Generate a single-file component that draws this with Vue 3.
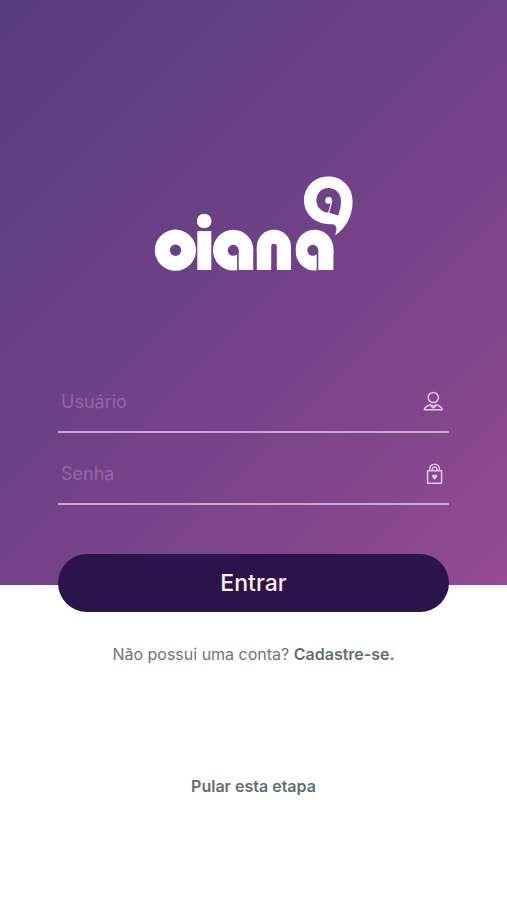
<script setup>
import { ref } from 'vue'

const user = ref('')
const password = ref('')
</script>

<template>
  <main class="login">
    <form class="hero" @submit.prevent>
      <svg class="logo" viewBox="0 0 200 96" role="img" aria-label="oiana">
        <defs>
          <mask id="cut-o">
            <rect width="200" height="96" fill="#fff" />
            <circle cx="21.5" cy="74.3" r="5.7" fill="#000" />
          </mask>
          <mask id="cut-first">
            <rect width="200" height="96" fill="#fff" />
            <circle cx="79.2" cy="74.3" r="5.5" fill="#000" />
            <rect x="83.1" y="74.3" width="1.6" height="21" fill="#000" />
          </mask>
          <mask id="cut-last">
            <rect width="200" height="96" fill="#fff" />
            <circle cx="158.8" cy="74.3" r="5.5" fill="#000" />
            <rect x="162.7" y="74.3" width="1.6" height="21" fill="#000" />
          </mask>
        </defs>
        <g fill="#fff">
          <circle cx="21.4" cy="74.2" r="20.6" mask="url(#cut-o)" />
          <circle cx="50.2" cy="45" r="7.3" />
          <rect x="43.3" y="55" width="14" height="39" />
          <g mask="url(#cut-first)">
            <ellipse cx="79.2" cy="74.2" rx="20.2" ry="20.4" />
            <rect x="84" y="74" width="15.2" height="20" />
          </g>
          <rect x="102.8" y="53.8" width="34.2" height="38" rx="17" />
          <rect x="102.8" y="72" width="14.4" height="22" />
          <rect x="122.8" y="72" width="14.2" height="22" />
          <g mask="url(#cut-last)">
            <rect x="141.8" y="53.8" width="37.6" height="40.8" rx="18.8" />
            <rect x="164" y="74" width="15.4" height="20" />
          </g>
          <path d="M174.4.6C160.5.6 150 11 150 24.6C150 38.8 162 48.3 176.5 48.3C180.3 48.2 182.7 49.8 182.5 53.2C182.4 55.5 181.5 57.4 181.1 59.3C191.5 52.5 198.6 40.5 198.6 25.6C198.6 10.8 188 .6 174.4.6Z" />
        </g>
        <rect x="117.2" y="67.8" width="5.6" height="27" rx="2.8" fill="#73428a" />
        <path d="M174.5 12C167.6 12 162.4 17.3 162.4 24.2C162.4 31 167.3 36.2 174 36.6L184.2 39.4C185.8 35 187 29.8 187 25.2C187 17.4 181.5 12 174.5 12Z" fill="#70428a" />
        <circle cx="174.6" cy="24.4" r="3.4" fill="#fff" />
        <path d="M177.4 24.4C177.5 29 175.5 32 174.7 37" fill="none" stroke="#fff" stroke-width="1.2" />
      </svg>

      <div class="fields">
        <label class="field">
          <input v-model="user" type="text" placeholder="Usuário" aria-label="Usuário" autocomplete="username" />
          <svg class="icon" viewBox="0 0 20 22" aria-hidden="true">
            <circle cx="10.3" cy="6.5" r="5.1" />
            <path d="M1.2 18.8C1.8 16.2 4.4 14.6 7.4 13.7L10.3 15.6L13.2 13.7C16.2 14.6 18.8 16.2 19.2 18.8Z" />
            <path d="M7.6 14.6L10.3 17L13 14.6" />
          </svg>
        </label>
        <label class="field">
          <input v-model="password" type="password" placeholder="Senha" aria-label="Senha" autocomplete="current-password" />
          <svg class="icon" viewBox="0 0 20 22" aria-hidden="true">
            <rect x="4.6" y="7.8" width="14" height="12.4" />
            <path d="M6.8 8V6A4.8 4.8 0 0 1 16.4 6V8M9.4 8V6.2A2.2 2.2 0 0 1 13.8 6.2V8" />
            <path class="solid" d="M11.6 16.8L9.2 13.9A1.5 1.5 0 0 1 11.6 12.1A1.5 1.5 0 0 1 14 13.9Z" />
          </svg>
        </label>
      </div>

      <button class="submit" type="submit">Entrar</button>
    </form>

    <p class="signup">Não possui uma conta? <a href="#cadastro">Cadastre-se.</a></p>
    <a class="skip" href="#inicio">Pular esta etapa</a>
  </main>
</template>

<style>
body {
  margin: 0;
  background: #fff;
}
</style>

<style scoped>
.login {
  display: flex;
  flex-direction: column;
  align-items: center;
  min-height: 100vh;
  font-family: Inter, "Open Sans", sans-serif;
  color: #68797d;
}

.hero {
  box-sizing: border-box;
  width: 100%;
  display: flex;
  flex-direction: column;
  align-items: center;
  padding: 176px 58px 0;
  background: linear-gradient(135deg, #593d81 0%, #5e3e84 16%, #744289 55%, #83468d 78%, #954b93 100%);
}

.logo {
  width: 200px;
  height: 96px;
  margin-bottom: 98px;
}

.fields {
  width: 100%;
  display: flex;
  flex-direction: column;
  gap: 8px;
  margin-bottom: 49px;
}

.field {
  display: flex;
  align-items: center;
  padding: 20px 6px 17px 3px;
  border-bottom: 2px solid #cea3d6;
}

.field + .field {
  padding-top: 21px;
}

.field input {
  flex: 1;
  min-width: 0;
  padding: 0;
  border: 0;
  outline: 0;
  background: transparent;
  color: #fff;
  font: 400 18px/24px Inter, "Open Sans", sans-serif;
}

.field input::placeholder {
  color: #9566a8;
  opacity: 1;
}

.icon {
  width: 20px;
  height: 22px;
  fill: none;
  stroke: #e5c5ea;
  stroke-width: 1.5;
  stroke-linejoin: round;
}

.icon .solid {
  fill: #e5c5ea;
  stroke: none;
}

.submit {
  width: 100%;
  height: 58px;
  margin-bottom: -27px;
  border: 0;
  border-radius: 29px;
  background: #2b144c;
  color: #f8effa;
  font: 500 23px/28px Inter, "Open Sans", sans-serif;
  cursor: pointer;
}

.signup {
  margin: 57px 0 0;
  font-size: 16px;
  line-height: 24px;
}

.signup a,
.skip {
  color: #5d7074;
  font-weight: 600;
  text-decoration: none;
}

.skip {
  margin-top: 108px;
  font-size: 16px;
  line-height: 24px;
}
</style>
